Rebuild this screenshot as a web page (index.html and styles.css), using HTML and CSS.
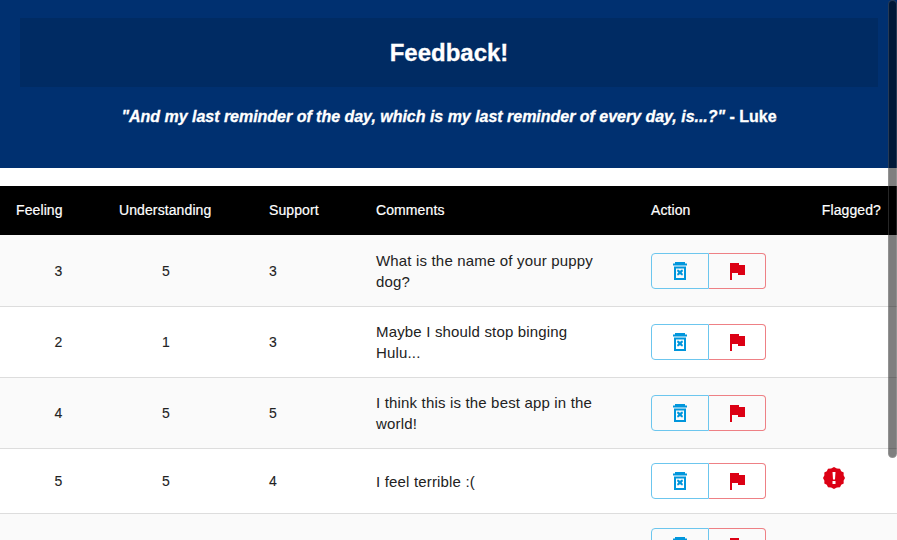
FILE: index.html
```html
<!DOCTYPE html>
<html lang="en">
<head>
<meta charset="utf-8">
<title>Feedback!</title>
<link rel="stylesheet" href="styles.css">
</head>
<body>
<svg class="defs" width="0" height="0" aria-hidden="true">
  <symbol id="trash" viewBox="0 0 14 18">
    <path d="M2 0h10v1.500h2v2H0v-2h2z"/>
    <path fill-rule="evenodd" d="M1 4.500h12V18H1zM3 6.500v9.500h8V6.500z"/>
    <path d="M4.200 7.800h1.600L7 9l1.200-1.200h1.600v1.600L8.600 10.500l1.200 1.200v1.600H8.200L7 12l-1.200 1.300H4.200v-1.600l1.200-1.200-1.200-1.100z"/>
  </symbol>
  <symbol id="flag" viewBox="0 0 15 17">
    <path d="M0 0h9v2h6v10H8v-2H2v7H0z"/>
  </symbol>
</svg>

<header class="banner">
  <div class="banner-title"><h1>Feedback!</h1></div>
  <p class="quote"><em>"And my last reminder of the day, which is my last reminder of every day, is...?"</em> - Luke</p>
</header>

<main class="feedback">
  <div class="table-head">
    <span class="head-feeling">Feeling</span>
    <span>Understanding</span>
    <span>Support</span>
    <span>Comments</span>
    <span>Action</span>
    <span class="head-flagged">Flagged?</span>
  </div>

  <div class="row">
    <span class="num">3</span><span class="num">5</span><span class="num">3</span>
    <p class="comment">What is the name of your puppy dog?</p>
    <div class="actions">
      <button class="btn btn-delete" aria-label="Delete"><svg class="icon-trash"><use href="#trash"/></svg></button>
      <button class="btn btn-flag" aria-label="Flag"><svg class="icon-flag"><use href="#flag"/></svg></button>
    </div>
    <span></span>
  </div>

  <div class="row">
    <span class="num">2</span><span class="num">1</span><span class="num">3</span>
    <p class="comment">Maybe I should stop binging Hulu...</p>
    <div class="actions">
      <button class="btn btn-delete" aria-label="Delete"><svg class="icon-trash"><use href="#trash"/></svg></button>
      <button class="btn btn-flag" aria-label="Flag"><svg class="icon-flag"><use href="#flag"/></svg></button>
    </div>
    <span></span>
  </div>

  <div class="row">
    <span class="num">4</span><span class="num">5</span><span class="num">5</span>
    <p class="comment">I think this is the best app in the world!</p>
    <div class="actions">
      <button class="btn btn-delete" aria-label="Delete"><svg class="icon-trash"><use href="#trash"/></svg></button>
      <button class="btn btn-flag" aria-label="Flag"><svg class="icon-flag"><use href="#flag"/></svg></button>
    </div>
    <span></span>
  </div>

  <div class="row">
    <span class="num">5</span><span class="num">5</span><span class="num">4</span>
    <p class="comment">I feel terrible :(</p>
    <div class="actions">
      <button class="btn btn-delete" aria-label="Delete"><svg class="icon-trash"><use href="#trash"/></svg></button>
      <button class="btn btn-flag" aria-label="Flag"><svg class="icon-flag"><use href="#flag"/></svg></button>
    </div>
    <svg class="badge" viewBox="-11 -11 22 22" aria-label="Flagged">
      <path class="badge-burst" d="M0-11 2.900-9.500 6-9.300 7.200-6.800 9.700-5.500 9.600-2.700 11 0 9.600 2.700 9.700 5.500 7.200 6.800 6 9.300 2.900 9.500 0 11-2.900 9.500-6 9.300-7.200 6.800-9.700 5.500-9.600 2.700-11 0-9.600-2.700-9.700-5.500-7.200-6.800-6-9.300-2.900-9.500z"/>
      <path class="badge-mark" d="M-1.500-6h3L1 1.500H-1zM-1.500 3h3v3h-3z"/>
    </svg>
  </div>

  <div class="row">
    <span></span><span></span><span></span><span></span>
    <div class="actions">
      <button class="btn btn-delete" aria-label="Delete"><svg class="icon-trash"><use href="#trash"/></svg></button>
      <button class="btn btn-flag" aria-label="Flag"><svg class="icon-flag"><use href="#flag"/></svg></button>
    </div>
    <span></span>
  </div>
</main>

<div class="scroll-thumb"></div>
</body>
</html>
```
FILE: styles.css
```css
* { box-sizing: border-box; }

html, body {
  margin: 0;
  height: 540px;
  overflow: hidden;
}

body {
  position: relative;
  background: #fff;
  color: #222;
  font-family: "Liberation Sans", Arial, sans-serif;
  font-size: 14px;
}

.defs { position: absolute; }

.banner {
  height: 168px;
  padding: 18px 19px 0 20px;
  background: #003070;
  color: #fff;
  text-align: center;
}

.banner-title {
  height: 69px;
  display: flex;
  align-items: center;
  justify-content: center;
  background: #002b63;
}

.banner-title h1 {
  margin: 0;
  font-size: 24px;
  font-weight: 700;
  -webkit-text-stroke: 0.3px #fff;
}

.quote {
  margin: 20px 0 0;
  font-size: 16px;
  line-height: 20px;
  font-weight: 700;
  letter-spacing: -0.02px;
  -webkit-text-stroke: 0.3px #fff;
}

.feedback { margin-top: 18px; }

.table-head {
  height: 49px;
  display: grid;
  grid-template-columns: 119px 150px 107px 275px 1fr auto;
  align-items: center;
  padding: 0 16px 2px 0;
  background: #000;
  color: #fff;
  letter-spacing: 0.1px;
  -webkit-text-stroke: 0.2px #fff;
}

.head-feeling { padding-left: 16px; }

.row {
  display: grid;
  grid-template-columns: 117px 98px 116px 320px 171px 1fr;
  align-items: center;
  padding: 14px 0;
  border-bottom: 1px solid #ddd;
}

.table-head + .row { padding-top: 15px; }

.row:nth-child(even) { background: #fafafa; }

.num {
  text-align: center;
  -webkit-text-stroke: 0.1px #222;
}

.comment {
  margin: 0;
  padding: 0 50px 0 45px;
  font-size: 15px;
  line-height: 21px;
  letter-spacing: 0.17px;
}

.actions { display: flex; }

.btn {
  height: 36px;
  padding: 0;
  display: flex;
  align-items: center;
  justify-content: center;
  background: transparent;
  border: 1px solid;
}

.btn-delete {
  width: 58px;
  border-color: #6cc6ee;
  border-radius: 4px 0 0 4px;
  color: #0096dc;
}

.btn-flag {
  width: 57px;
  border-color: #ee8085;
  border-left: 0;
  border-radius: 0 4px 4px 0;
  color: #dc0014;
}

.icon-trash {
  width: 14px;
  height: 18px;
  fill: currentColor;
}

.icon-flag {
  width: 15px;
  height: 17px;
  margin: 1px 0 0 1px;
  fill: currentColor;
}

.badge {
  width: 22px;
  height: 22px;
  margin: 0 0 7px 1px;
}

.badge-burst { fill: #dc0014; }
.badge-mark { fill: #fff; }

.scroll-thumb {
  position: absolute;
  top: 0;
  right: 0;
  width: 9px;
  height: 458px;
  border: 1px solid rgba(255, 255, 255, 0.15);
  border-radius: 5px;
  background: rgba(0, 0, 0, 0.5);
}
```
